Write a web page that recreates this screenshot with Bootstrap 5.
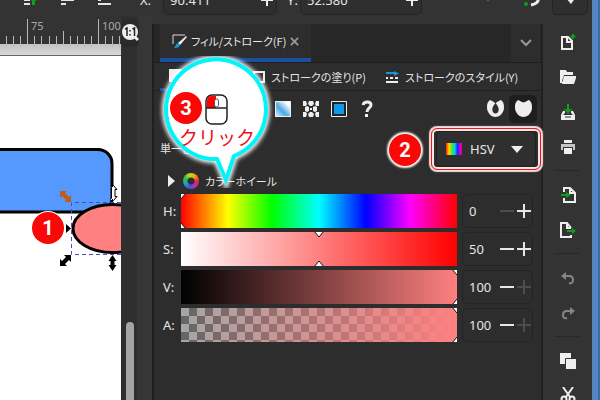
<!DOCTYPE html>
<html lang="ja">
<head>
<meta charset="utf-8">
<meta name="viewport" content="width=device-width, initial-scale=1">
<title>フィル/ストローク</title>
<link rel="stylesheet" href="https://cdn.jsdelivr.net/npm/bootstrap@5.3.0/dist/css/bootstrap.min.css">
<style>
  body { background: #333; color: #e6e6e6; font: 13px/16px "Noto Sans", "Noto Sans CJK JP", sans-serif; }
  svg { display: block; flex: none; }
  button { padding: 0; border: 0; background: none; color: inherit; font: inherit; }
  .jp { font-family: "Noto Sans CJK JP", sans-serif; font-size: 11px; font-feature-settings: "palt"; white-space: nowrap; }
  .window-edge { width: 8px; background: linear-gradient(90deg, #5585bf 0 6px, #3d6aa3 6px); }
  .topbar { margin-top: -16px; height: 32px; padding-left: 23px; }
  .top-x { margin-left: 25px; }
  .spin { border: 1px solid #242424; border-radius: 5px; height: 31px; background: #2f2f2f; }
  .spin input { background: none; border: 0; color: inherit; padding: 0 0 0 6px; min-width: 0; width: 100%; }
  .top-spin { width: 114px; margin: 0 10px 0 12px; }
  .top-spin-wide { width: 122px; margin-left: 2px; }
  .canvas-col { width: 121px; background: #fff; }
  .scroll-col { width: 31px; background: linear-gradient(90deg, #2f2f2f 0 16px, #363636 16px); }
  .zoom-btn { height: 28px; width: 18px; margin-top: 3px; background: #2a2a2a; border-radius: 5px; }
  .scroll-thumb { width: 8px; height: 78px; margin-left: 5px; background: #a5a5a5; border-radius: 4px 4px 0 0; }
  .dock { background: #2d2d2d; border-left: 2px solid #1f1f1f; border-right: 2px solid #202020; margin-top: 8px; min-width: 0; }
  .dock-head { height: 38px; background: #272727; padding-left: 6px; }
  .dock-tab { width: 151px; background: #2d2d2d; border-bottom: 4px solid #1b50a1; padding-left: 12px; gap: 4px; }
  .dock-menu { width: 29px; background: #2d2d2d; margin-right: 1px; }
  .subtabs { height: 29px; border-top: 1px solid #1d1d1d; border-bottom: 1px solid #202020; padding-left: 6px; }
  .subtab { gap: 6px; height: 28px; }
  .subtab-fill { width: 93px; padding-left: 9px; border-bottom: 3px solid #1b50a1; }
  .subtab-stroke { width: 132px; }
  .paints { height: 33px; padding: 2px 4px 0 8px; }
  .paint-list { padding-left: 113px; gap: 12px; }
  .rule-btn { width: 28px; height: 28px; border-radius: 5px; }
  .rule-btn.is-on { background: #1e1e1e; }
  .mode-row { height: 45px; padding: 0 5px 0 6px; }
  .hsv-wrap { width: 100px; height: 36px; margin-top: 7px; }
  .hsv-btn { border: 1px solid #202020; border-radius: 4px; background: #2f2f2f; padding: 0 12px 0 9px; }
  .swatch { width: 16px; height: 12px; background: linear-gradient(90deg, #f20, #fd0 20%, #3e3 38%, #0ce 56%, #22f 72%, #c0e 88%, #f04); }
  .focus-frame { inset: -2px -4px; border: 2px solid #f7e6e6; border-radius: 5px; outline: 1px solid #f5141c; box-shadow: 0 0 1px 3px #f7dede; pointer-events: none; }
  .step-dot { width: 32px; height: 32px; border-radius: 50%; background: #fa0808; color: #fff; font: bold 20px/32px Roboto, sans-serif; text-align: center; }
  .step-two { left: -47px; top: 3px; box-shadow: 0 0 2px 2px #fff; }
  .wheel-row { height: 24px; padding-left: 14px; gap: 6px; }
  .wheel { width: 16px; height: 16px; border-radius: 50%; background: radial-gradient(circle, #2d2d2d 3px, transparent 4px), conic-gradient(from 90deg, #e03030, #b030c0, #4050e0, #20a0c0, #30c040, #c8d820, #f0a020, #e03030); }
  .sliders { padding: 1px 8px 0 9px; gap: 4px; }
  .channel { height: 34px; }
  .channel label { width: 18px; }
  .track { min-width: 0; margin-right: 5px; }
  .track input { appearance: none; width: 100%; height: 34px; margin: 0; display: block; }
  .track input::-webkit-slider-thumb { appearance: none; width: 1px; height: 34px; background: transparent; }
  .marker { top: 0; width: 12px; height: 34px; margin-left: -6px; pointer-events: none; }
  .bar-h { background: linear-gradient(90deg, #f00, #ff0 17%, #0f0 33%, #0ff 50%, #00f 67%, #f0f 83%, #f00); }
  .bar-s { background: linear-gradient(90deg, #fff, #f00); }
  .bar-v { background: linear-gradient(90deg, #000, #ff8080); }
  .bar-a { background: linear-gradient(90deg, rgba(255,128,128,0), #ff8080), repeating-conic-gradient(#666 0 25%, #a6a6a6 0 50%) 0 0 / 16px 16px; }
  .value-box { width: 71px; height: 34px; background: #2d2d2d; }
  .value-box button { width: 17px; height: 30px; }
  .value-box button:disabled { color: #4c4c4c; }
  .value-box input { flex: 1; }
  .tools { width: 49px; padding-top: 8px; }
  .tools button { height: 35px; flex: none; }
  .tools hr { margin: 6px 12px; height: 1px; flex: none; border: 0; background: #282828; opacity: 1; }
  .bubble { left: 2px; top: 32px; z-index: 3; pointer-events: none; }
  .bubble-word { left: 23px; top: 68px; color: #f01018; font: 19px/26px "Noto Sans CJK JP", sans-serif; white-space: nowrap; }
  .step-three { left: 14px; top: 36px; }
  .dim { color: #858585; }
</style>
<script src="https://cdn.jsdelivr.net/npm/bootstrap@5.3.0/dist/js/bootstrap.bundle.min.js"></script>
</head>
<body class="vh-100 overflow-hidden d-flex">
<div class="d-flex flex-column flex-grow-1 overflow-hidden">

  <header class="topbar d-flex align-items-start flex-shrink-0">
    <svg width="92" height="32" viewBox="23 -16 92 32"><path d="M24 -1h6v2h-6zM24 3h6v2h-6zM61 -1h13v2H61zM61 3h5v2h-5zM98 -1h3v2h-3zM98 3h13v2H98z" fill="#e4e4e4"/><path d="M31 0h6l-2 1v4h-3V1z M104 -2h5v2h-5z" fill="#0ba01a"/></svg>
    <label class="d-flex align-items-center spin border-0 bg-transparent top-x" for="posx">X:</label>
    <div class="spin top-spin d-flex align-items-center"><input id="posx" value="90.411"><svg width="18" height="30" viewBox="0 0 18 30"><path d="M9 9v12M3 15h12" stroke="#eee" stroke-width="2"/></svg></div>
    <label class="d-flex align-items-center spin border-0 bg-transparent" for="posy">Y:</label>
    <div class="spin top-spin-wide d-flex align-items-center"><input id="posy" value="52.580"><svg width="18" height="30" viewBox="0 0 18 30"><path d="M9 9v12M3 15h12" stroke="#eee" stroke-width="2"/></svg></div>
    <svg class="ms-auto" width="64" height="32" viewBox="486 -16 64 32"><path d="M488 -1h4l-2 2z" fill="#888"/><path d="M540 -2c1 4-2 6-7 7" fill="none" stroke="#eee" stroke-width="3"/><circle cx="528" cy="4" r="2" fill="#0ba01a"/></svg>
    <button class="spin ms-1 me-1" aria-label="詳細"><svg width="34" height="29" viewBox="0 0 34 29"><path d="M12 12h11l-5 7z" fill="#eee"/></svg></button>
  </header>

  <main class="d-flex flex-grow-1 overflow-hidden">
    <section class="canvas-col flex-shrink-0 overflow-hidden" aria-label="キャンバス">
      <svg width="121" height="384" viewBox="0 16 121 384">
        <defs><linearGradient id="rs" x2="0" y2="1"><stop stop-color="#c4c4c4"/><stop offset="1" stop-color="#d6d6d6"/></linearGradient></defs>
        <path d="M0 16h121v28H0z" fill="#333"/><path d="M0 44h121v11H0z" fill="url(#rs)"/><path d="M0 55h121v1H0z" fill="#666"/>
        <path d="M6.5 36v11M13.500 36v11M20.500 36v11M34.500 36v11M41.500 36v11M49.500 36v11M56.500 36v11M70.500 36v11M77.500 36v11M84.500 36v11M91.500 36v11M105.500 36v11M112.500 36v11M119.500 36v11M63.500 31v14M27.500 19v26M98.500 19v26" stroke="#b8b8b8"/>
        <g font-size="11" fill="#aaa"><text x="31" y="30">75</text><text x="102" y="30">100</text></g>
        <rect x="-20" y="149.500" width="132" height="62.500" rx="14" fill="#59f" stroke="#000" stroke-width="3"/>
        <ellipse cx="112.500" cy="228.500" rx="39.500" ry="24" fill="#ff8080" stroke="#000" stroke-width="3"/>
        <path d="M121 202.500H71.500v52H121" fill="none" stroke="#4b4bc0" stroke-dasharray="4 3"/>
        <path d="M60 191h7l-2 2 4 4 2-2v7h-7l2-2-4-4-2 2z" fill="#c35a17"/>
        <path d="M71 255h-7l2 2-4 4-2-2v7h7l-2-2 4-4 2 2z"/>
        <path d="M112.500 255l4 6h-2v4h2l-4 6-4-6h2v-4h-2z"/>
        <path d="M111 187h3v13h-3z" fill="#fff"/><path d="M113.500 185.500l3.500 4h-2v7h2l-3.500 4-2-2v-11z" fill="#fff" stroke="#000"/>
        <path d="M66 224l5 4.500-5 4.500z"/>
        <circle cx="48" cy="228" r="17" fill="#fff"/><circle cx="48" cy="228" r="16" fill="#fa0808"/>
        <text x="48" y="235" text-anchor="middle" font-family="Roboto, sans-serif" font-weight="bold" font-size="20" fill="#fff">1</text>
      </svg>
    </section>

    <div class="scroll-col flex-shrink-0 d-flex flex-column justify-content-between">
      <button class="zoom-btn" aria-label="1:1"><svg width="18" height="26" viewBox="0 0 18 26"><path d="M13 16l4 4" stroke="#eee" stroke-width="3"/><circle cx="9" cy="12" r="8" fill="#eee"/><path d="M4 9l2-1v8M11.500 9l2-1v8M9 10v1.500M9 14v1.500" fill="none" stroke="#222" stroke-width="1.500"/></svg></button>
      <div class="scroll-thumb"></div>
    </div>

    <section class="dock flex-grow-1 position-relative">
      <div class="dock-head d-flex">
        <div class="dock-tab d-flex align-items-center">
          <svg width="15" height="15" viewBox="0 0 15 15"><path d="M13 1H1v9" fill="none" stroke="#ddd"/><path d="M14 2l1 1-7 8-2-2z" fill="#eee"/><path d="M6 9l2 2c-1 3-4 3-6 3 2-1 1-4 4-5z" fill="#1b94dd"/></svg>
          <span class="jp">フィル/ストローク(F)</span>
          <button aria-label="閉じる"><svg width="9" height="9" viewBox="0 0 10 10"><path d="M1 1l8 8M9 1L1 9" stroke="#999" stroke-width="2"/></svg></button>
        </div>
        <button class="dock-menu ms-auto d-flex align-items-center justify-content-center" aria-label="メニュー"><svg width="12" height="8" viewBox="0 0 12 8"><path d="M1 1l5 5 5-5" fill="none" stroke="#999" stroke-width="2"/></svg></button>
      </div>
      <div class="subtabs d-flex">
        <button class="subtab subtab-fill d-flex align-items-center"><svg width="13" height="13"><path d="M0 0h13v13H0z" fill="#eee"/></svg><span class="jp">フィル(F)</span></button>
        <button class="subtab subtab-stroke d-flex align-items-center"><svg width="12" height="12"><path d="M1 1h10v10H1z" fill="none" stroke="#eee" stroke-width="2"/></svg><span class="jp">ストロークの塗り(P)</span></button>
        <button class="subtab d-flex align-items-center"><svg width="14" height="12" viewBox="0 0 14 12"><path d="M1 2h9" stroke="#1b94dd" stroke-width="2"/><path d="M9 0l5 2.500L9 5z" fill="#1b94dd"/><path d="M1 7h2M5 7h3M10 7h3M1 11h12" stroke="#eee" stroke-width="2"/></svg><span class="jp">ストロークのスタイル(Y)</span></button>
      </div>

      <div class="paints d-flex align-items-center">
        <div class="paint-list d-flex align-items-center me-auto">
          <button aria-label="グラデーション"><svg width="16" height="16"><defs><linearGradient id="gr" x1="1" y1="0" x2="0" y2="1"><stop offset=".15" stop-color="#fff"/><stop offset=".6" stop-color="#4ca9e6"/><stop offset="1" stop-color="#d5ebfa"/></linearGradient></defs><path d="M0 0h16v16H0z" fill="#eee"/><path d="M1 1h14v14H1z" fill="url(#gr)"/></svg></button>
          <button aria-label="パターン"><svg width="16" height="16" viewBox="0 0 16 16"><path d="M0 0h3l1 3-1 2H0zM6 0h4l1 3-2 2H7L5 3zM13 0h3v5h-3l-1-2zM4 5l2 1v4l-2 1-2-1V6zM12 5l2 1v4l-2 1-2-1V6zM0 11h3l1 2-1 3H0zM7 11h2l2 2-1 3H6l-1-3zM13 11h3v5h-3l-1-3z" fill="#eee"/><path d="M7 7h2v2H7z" fill="#eee"/></svg></button>
          <button aria-label="スウォッチ"><svg width="16" height="16"><path d="M.5 .5h15v15H.5z" fill="#222" stroke="#eee"/><path d="M3 3h10v10H3z" fill="#0b9bea"/></svg></button>
          <button aria-label="未設定"><svg width="16" height="18" viewBox="0 0 16 18"><path d="M4 5c1-4 8-4 8 0 0 3-4 3-4 7" fill="none" stroke="#eee" stroke-width="3"/><path d="M6 14h3v3H6z" fill="#eee"/></svg></button>
        </div>
        <button class="rule-btn d-flex align-items-center justify-content-center" aria-label="偶奇規則"><svg width="17" height="17" viewBox="0 0 16 16"><path fill-rule="evenodd" d="M3 0l4 2h2l4-2c3 2 3 5 3 7 0 5-4 9-8 9S0 12 0 7c0-2 0-5 3-7zM8 3C6 5 5 7 5 9c0 5 6 5 6 0 0-2-1-4-3-6z" fill="#eee"/><path d="M6 0h4L8 4z" fill="#2d2d2d"/></svg></button>
        <button class="rule-btn is-on d-flex align-items-center justify-content-center" aria-label="非ゼロ規則"><svg width="17" height="17" viewBox="0 0 16 16"><path d="M3 0l4 2h2l4-2c3 2 3 5 3 7 0 5-4 9-8 9S0 12 0 7c0-2 0-5 3-7z" fill="#eee"/></svg></button>
      </div>

      <div class="mode-row d-flex align-items-start justify-content-between">
        <span class="jp pt-3">単一色</span>
        <div class="hsv-wrap position-relative">
          <button class="hsv-btn w-100 h-100 d-flex align-items-center">
            <span class="swatch me-2"></span><span>HSV</span>
            <svg class="ms-auto" width="12" height="7"><path d="M0 0h12L6 7z" fill="#eee"/></svg>
          </button>
          <div class="focus-frame position-absolute"></div>
          <div class="step-dot step-two position-absolute">2</div>
        </div>
      </div>

      <div class="wheel-row d-flex align-items-center">
        <button class="d-flex align-items-center gap-2" aria-label="カラーホイール"><svg width="7" height="12"><path d="M0 0l7 6-7 6z" fill="#eee"/></svg><span class="wheel"></span></button>
        <span class="jp">カラーホイール</span>
      </div>

      <div class="sliders d-flex flex-column">
        <div class="channel d-flex align-items-center"><label for="rh">H:</label>
          <div class="track flex-grow-1 position-relative overflow-hidden"><input class="bar-h" id="rh" type="range" value="0"><svg class="marker position-absolute" style="left:0%"><use href="#mk"/></svg></div>
          <div class="spin value-box d-flex align-items-center"><input aria-label="H" value="0"><button disabled aria-label="H−"><svg width="17" height="30"><use href="#minus"/></svg></button><button aria-label="H+"><svg width="17" height="30"><use href="#plus"/></svg></button></div></div>
        <div class="channel d-flex align-items-center"><label for="rs2">S:</label>
          <div class="track flex-grow-1 position-relative overflow-hidden"><input class="bar-s" id="rs2" type="range" value="50"><svg class="marker position-absolute" style="left:50%"><use href="#mk"/></svg></div>
          <div class="spin value-box d-flex align-items-center"><input aria-label="S" value="50"><button aria-label="S−"><svg width="17" height="30"><use href="#minus"/></svg></button><button aria-label="S+"><svg width="17" height="30"><use href="#plus"/></svg></button></div></div>
        <div class="channel d-flex align-items-center"><label for="rv">V:</label>
          <div class="track flex-grow-1 position-relative overflow-hidden"><input class="bar-v" id="rv" type="range" value="100"><svg class="marker position-absolute" style="left:100%"><use href="#mk"/></svg></div>
          <div class="spin value-box d-flex align-items-center"><input aria-label="V" value="100"><button aria-label="V−"><svg width="17" height="30"><use href="#minus"/></svg></button><button disabled aria-label="V+"><svg width="17" height="30"><use href="#plus"/></svg></button></div></div>
        <div class="channel d-flex align-items-center"><label for="ra">A:</label>
          <div class="track flex-grow-1 position-relative overflow-hidden"><input class="bar-a" id="ra" type="range" value="100"><svg class="marker position-absolute" style="left:100%"><use href="#mk"/></svg></div>
          <div class="spin value-box d-flex align-items-center"><input aria-label="A" value="100"><button aria-label="A−"><svg width="17" height="30"><use href="#minus"/></svg></button><button disabled aria-label="A+"><svg width="17" height="30"><use href="#plus"/></svg></button></div></div>
      </div>

      <div class="bubble position-absolute">
        <svg width="118" height="132" viewBox="0 0 118 132">
          <defs><filter id="soft" x="-20%" y="-20%" width="140%" height="140%"><feGaussianBlur stdDeviation="2"/></filter>
          <path id="bub" d="M54 103A50 50 0 1 1 78 100L70 124 61 103Z"/></defs>
          <use href="#bub" fill="none" stroke="#fff" stroke-width="8" filter="url(#soft)"/>
          <use href="#bub" fill="#fff" stroke="#00f5f8" stroke-width="4"/>
          <rect x="50" y="39" width="21" height="29" rx="6" fill="#fff" stroke="#222" stroke-width="1.500"/>
          <path d="M51 52v-7q0-5 5-5h4v12z" fill="#f00"/><path d="M50 52h21" stroke="#222" stroke-width="1.500"/><rect x="58.500" y="43" width="4" height="8" rx="2" fill="#fff" stroke="#555"/>
        </svg>
        <div class="step-dot step-three position-absolute">3</div>
        <div class="bubble-word position-absolute">クリック</div>
      </div>
    </section>

    <nav class="tools d-flex flex-column align-items-stretch flex-shrink-0" aria-label="コマンド">
      <button aria-label="新規"><svg class="mx-auto" width="18" height="18" viewBox="0 0 18 18"><path d="M3 4h6l4 4v8H3z" fill="none" stroke="#eee" stroke-width="2"/><path d="M8 4v5h5" fill="none" stroke="#eee" stroke-width="2"/><path d="M14 1v5M11.500 3.500h5" stroke="#0ba01a" stroke-width="2"/></svg></button>
      <button aria-label="開く"><svg class="mx-auto" width="18" height="18" viewBox="0 0 18 18"><path d="M1 2h6l1 2h6v3H5L3 13l1 2H1zM5 8h12v2l-2 6H3z" fill="#eee"/></svg></button>
      <button aria-label="保存"><svg class="mx-auto" width="18" height="18" viewBox="0 0 18 18"><path d="M4 8h2v2l-2 2h10l-2-2V8h2l2 4v5H2v-5z" fill="#eee"/><path d="M8 1h2v5h3l-4 5-4-5h3z" fill="#0ba01a"/><path d="M6 14h6" stroke="#333"/></svg></button>
      <button aria-label="印刷"><svg class="mx-auto" width="18" height="18" viewBox="0 0 18 18"><path d="M5 2h8v3H5zM5 10h8v6H5z" fill="#eee"/><path d="M2 6h14v6h-2V9H4v3H2z" fill="#c4c4c4"/></svg></button>
      <hr>
      <button aria-label="インポート"><svg class="mx-auto" width="18" height="18" viewBox="0 0 18 18"><path d="M5 6V2h6l5 5v9H5v-4M11 2v5h5" fill="none" stroke="#eee" stroke-width="2"/><path d="M2 9h6" stroke="#0ba01a" stroke-width="2"/><path d="M7 6l5 3-5 3z" fill="#0ba01a"/></svg></button>
      <button aria-label="エクスポート"><svg class="mx-auto" width="18" height="18" viewBox="0 0 18 18"><path d="M12 7L8 2H2v14h10v-2M8 2v5h4" fill="none" stroke="#eee" stroke-width="2"/><path d="M8 10h6" stroke="#0ba01a" stroke-width="2"/><path d="M13 7l4 3-4 3z" fill="#0ba01a"/></svg></button>
      <hr>
      <button class="dim" aria-label="元に戻す"><svg class="mx-auto" width="18" height="18" viewBox="0 0 18 18"><path d="M5 7h5q4 0 4 4t-4 3" fill="none" stroke="currentColor" stroke-width="2"/><path d="M7 3v8L2 7z" fill="currentColor"/></svg></button>
      <button class="dim" aria-label="やり直す"><svg class="mx-auto" width="18" height="18" viewBox="0 0 18 18"><path d="M13 7H8q-4 0-4 4t4 3" fill="none" stroke="currentColor" stroke-width="2"/><path d="M11 3v8l5-4z" fill="currentColor"/></svg></button>
      <hr>
      <button aria-label="コピー"><svg class="mx-auto" width="18" height="18" viewBox="0 0 18 18"><path d="M1 1h11v11H1z" fill="#eee"/><path d="M6.500 6.500h11v11h-11z" fill="#eee" stroke="#333"/></svg></button>
      <button aria-label="切り取り"><svg class="mx-auto" width="18" height="18" viewBox="0 0 18 18"><path d="M4 0l7 10M14 0L7 10" stroke="#eee" stroke-width="2"/><circle cx="5" cy="12" r="2.500" fill="none" stroke="#eee" stroke-width="2"/><circle cx="13" cy="12" r="2.500" fill="none" stroke="#eee" stroke-width="2"/></svg></button>
    </nav>
  </main>
</div>
<div class="window-edge flex-shrink-0"></div>

<svg width="0" height="0" class="position-absolute">
  <symbol id="mk" overflow="visible"><path d="M1 -1l5 6 5-6zM1 35l5-6 5 6z" fill="#fff" stroke="#111"/></symbol>
  <symbol id="minus" overflow="visible"><path d="M2 15h14" stroke="currentColor" stroke-width="2"/></symbol>
  <symbol id="plus" overflow="visible"><path d="M2 15h14M9 8v14" stroke="currentColor" stroke-width="2"/></symbol>
</svg>
</body>
</html>
